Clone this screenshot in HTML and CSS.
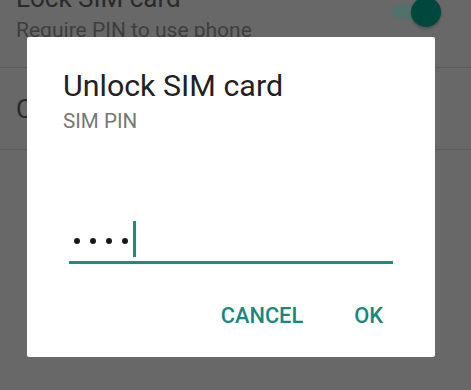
FILE: index.html
```html
<!DOCTYPE html>
<html>
<head>
<meta charset="utf-8">
<link rel="stylesheet" href="styles.css">
</head>
<body>
<div class="screen">
  <div class="list">
    <div class="row row-first">
      <div class="row-text">
        <div class="row-title">Lock SIM card</div>
        <div class="row-sub">Require PIN to use phone</div>
      </div>
      <div class="switch"><span class="track"></span><span class="knob"></span></div>
    </div>
    <div class="row row-single">
      <div class="row-text">
        <div class="row-title">Change SIM PIN</div>
      </div>
    </div>
  </div>
  <div class="dialog">
    <div class="dlg-title">Unlock SIM card</div>
    <div class="dlg-sub">SIM PIN</div>
    <div class="field">
      <div class="dots"><span class="dot"></span><span class="dot"></span><span class="dot"></span><span class="dot"></span><span class="caret"></span></div>
    </div>
    <div class="actions">
      <span class="btn">CANCEL</span>
      <span class="btn">OK</span>
    </div>
  </div>
</div>
</body>
</html>
```
FILE: styles.css
```css
html, body {
  margin: 0;
  padding: 0;
  background: #686868;
  font-family: Roboto, "Liberation Sans", sans-serif;
  overflow: hidden;
}
.screen {
  position: relative;
  width: 471px;
  height: 390px;
  overflow: hidden;
}
.list {
  margin-top: -17px;
}
.row {
  display: flex;
  align-items: center;
  height: 81px;
  border-bottom: 1px solid #5d5d5d;
  padding: 0 16px;
}
.row-first {
  align-items: flex-start;
  height: 84px;
}
.row-text {
  flex: 1;
}
.row-title {
  font-size: 26px;
  line-height: 30px;
  color: #2a2a2a;
}
.row-sub {
  font-size: 21px;
  line-height: 26px;
  color: #3e3e3e;
  margin-top: 4px;
}
.switch {
  position: relative;
  width: 50px;
  height: 30px;
  margin-top: 14px;
  margin-right: 13px;
}
.track {
  position: absolute;
  left: 0;
  top: 7px;
  width: 40px;
  height: 15px;
  border-radius: 8px;
  background: #52716d;
}
.knob {
  position: absolute;
  left: 19px;
  top: 0;
  width: 30px;
  height: 30px;
  border-radius: 50%;
  background: #00473e;
  box-shadow: 0 2px 3px rgba(0,0,0,0.25);
}
.dialog {
  position: absolute;
  left: 27px;
  top: 37px;
  width: 408px;
  height: 320px;
  background: #ffffff;
  border-radius: 2px;
  box-sizing: border-box;
  padding: 31px 42px 0 36px;
}
.dlg-title {
  font-size: 30.4px;
  line-height: 36px;
  color: #212121;
}
.dlg-sub {
  font-size: 20.6px;
  line-height: 24px;
  color: #777777;
  margin-top: 5px;
}
.field {
  margin-top: 88px;
  margin-left: 6px;
  border-bottom: 3px solid #1c8a80;
  height: 43px;
  box-sizing: border-box;
}
.dots {
  display: flex;
  align-items: center;
  gap: 10px;
  padding-left: 5px;
  height: 40px;
}
.dot {
  width: 6px;
  height: 6px;
  border-radius: 50%;
  background: #1a1a1a;
}
.caret {
  width: 2.5px;
  height: 36px;
  margin-left: -5px;
  align-self: flex-start;
  background: #1c8a80;
}
.actions {
  display: flex;
  justify-content: flex-end;
  gap: 51px;
  margin-top: 40px;
  margin-right: 10px;
}
.btn {
  font-size: 21.8px;
  font-weight: 500;
  line-height: 24px;
  color: #16887e;
}
```
